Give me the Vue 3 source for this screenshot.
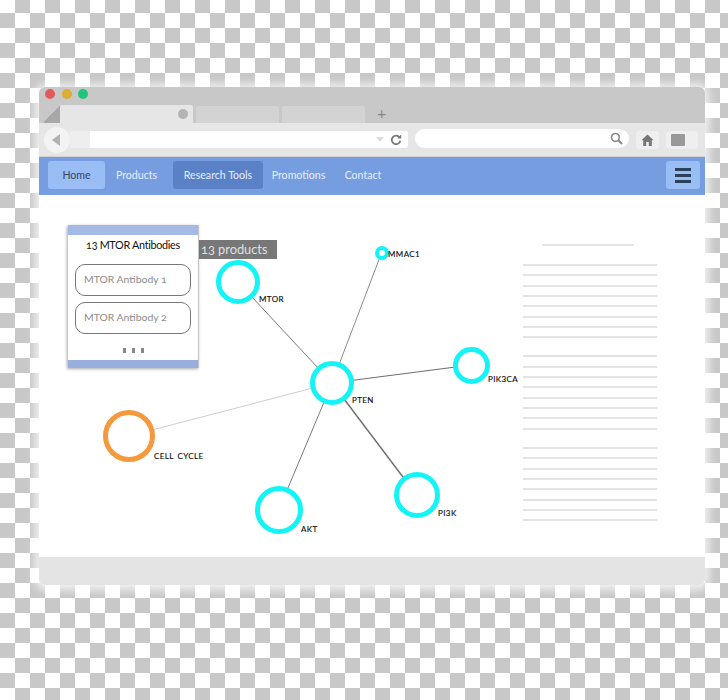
<template>
  <div class="page">
    <div class="window">
      <!-- Title bar with tabs -->
      <div class="titlebar">
        <div class="lights">
          <span class="light red"></span>
          <span class="light yellow"></span>
          <span class="light green"></span>
        </div>
        <div class="tabs">
          <span class="tab-corner"></span>
          <div class="tab active"><span class="tab-close"></span></div>
          <div class="tab"></div>
          <div class="tab"></div>
          <span class="tab-plus">+</span>
        </div>
      </div>

      <!-- Toolbar -->
      <div class="toolbar">
        <div class="back"><span class="back-arrow"></span></div>
        <div class="back-gap"></div>
        <div class="url">
          <span class="url-caret"></span>
          <svg class="reload" width="12" height="12" viewBox="0 0 12 12">
            <path d="M9.6 3.4A4.3 4.3 0 1 0 10.3 6.8" fill="none" stroke="#777" stroke-width="1.7" />
            <path d="M7.3 4.4h3.9V0.6z" fill="#777" />
          </svg>
        </div>
        <div class="search">
          <svg width="13" height="13" viewBox="0 0 12 12">
            <circle cx="5" cy="5" r="3.6" fill="none" stroke="#888" stroke-width="1.5" />
            <path d="M7.7 7.7l3.4 3.4" stroke="#888" stroke-width="1.9" />
          </svg>
        </div>
        <div class="tool-btn home-btn">
          <svg width="13" height="12" viewBox="0 0 13 12">
            <path d="M6.5 0.5L0.4 6.2h1.8V12h3V8h2.6v4h3V6.2h1.8z" fill="#777" />
          </svg>
        </div>
        <div class="tool-btn ext-btn"><span class="ext-square"></span></div>
      </div>

      <!-- Navbar -->
      <nav class="navbar">
        <a v-for="item in navItems" :key="item.label" class="nav-item" :class="item.kind">{{ item.label }}</a>
        <button class="burger">
          <span></span>
          <span></span>
          <span></span>
        </button>
      </nav>

      <!-- Content -->
      <div class="content">
        <div class="canvas">
          <svg class="edges" width="484" height="362" viewBox="0 0 484 362">
            <line
              v-for="edge in edges"
              :key="edge.to"
              :x1="hub.x"
              :y1="hub.y"
              :x2="edge.x"
              :y2="edge.y"
              :stroke="edge.color"
              :stroke-width="edge.width"
            />
          </svg>

          <div class="panel">
            <div class="panel-band"></div>
            <div class="panel-body">
              <h3 class="panel-title">13 MTOR Antibodies</h3>
              <div class="panel-item">MTOR Antibody 1</div>
              <div class="panel-item">MTOR Antibody 2</div>
              <div class="panel-more"><i></i><i></i><i></i></div>
            </div>
            <div class="panel-band bottom"></div>
          </div>
          <div class="tag">13 products</div>

          <div
            v-for="node in nodes"
            :key="node.name"
            class="node"
            :class="{ orange: node.orange }"
            :style="{
              left: node.x - node.r + 'px',
              top: node.y - node.r + 'px',
              width: node.r * 2 + 'px',
              height: node.r * 2 + 'px',
              borderWidth: node.ring + 'px',
            }"
          ></div>
          <span
            v-for="node in nodes"
            :key="node.name + '-label'"
            class="node-label"
            :style="{ left: node.lx + 'px', top: node.ly + 'px' }"
          >{{ node.name }}</span>
        </div>

        <div class="sidebar">
          <div class="sidebar-head"></div>
          <div v-for="n in 3" :key="n" class="line-group">
            <span v-for="l in 8" :key="l" class="line"></span>
          </div>
        </div>
      </div>

      <div class="footer"></div>
    </div>
  </div>
</template>

<script setup>
const navItems = [
  { label: "Home", kind: "current" },
  { label: "Products", kind: "products" },
  { label: "Research Tools", kind: "selected" },
  { label: "Promotions", kind: "promotions" },
  { label: "Contact", kind: "contact" },
];

// canvas starts at 39,195 in the screenshot
const at = (x, y) => ({ x: x - 39, y: y - 195 });

const hub = at(332, 383);

const nodes = [
  { name: "MTOR", ...at(238, 282), r: 22, ring: 5.5, lx: 220, ly: 99 },
  { name: "MMAC1", ...at(381.5, 253), r: 7, ring: 4.5, lx: 349, ly: 54 },
  { name: "PTEN", ...hub, r: 22, ring: 5.5, lx: 313, ly: 200 },
  { name: "PIK3CA", ...at(471, 365), r: 18.5, ring: 5, lx: 449, ly: 179 },
  { name: "CELL CYCLE", ...at(129, 436), r: 26, ring: 5, lx: 115, ly: 256, orange: true },
  { name: "AKT", ...at(279, 509.5), r: 24, ring: 5.5, lx: 262, ly: 329 },
  { name: "PI3K", ...at(416.5, 495), r: 23, ring: 5.5, lx: 399, ly: 313 },
];

const edges = [
  { to: "MTOR", ...at(238, 282), color: "#7a7a7a", width: 1 },
  { to: "MMAC1", ...at(381.5, 253), color: "#8a8a8a", width: 1 },
  { to: "PIK3CA", ...at(471, 365), color: "#6e6e6e", width: 1 },
  { to: "CELL CYCLE", ...at(129, 436), color: "#cecece", width: 1 },
  { to: "AKT", ...at(279, 509.5), color: "#7a7a7a", width: 1 },
  { to: "PI3K", ...at(416.5, 495), color: "#6e6e6e", width: 1.4 },
];
</script>

<style scoped>
.page {
  width: 728px;
  height: 700px;
  box-sizing: border-box;
  padding: 87px 23px 0 39px;
  overflow: hidden;
  background-color: #fff;
  background-image: repeating-conic-gradient(#c8c8c8 0 25%, #fff 0 50%);
  background-size: 30px 30px;
  background-position: 0 -2px;
  font-family: Lato, "Open Sans", sans-serif;
}

.window {
  width: 666px;
  height: 498px;
  display: flex;
  flex-direction: column;
  border-radius: 6px;
  background: #fff;
  box-shadow: 0 1px 9px 4px rgba(255, 255, 255, 0.75);
}

/* Title bar */
.titlebar {
  height: 36px;
  background: #c8c8c8;
  border-radius: 6px 6px 0 0;
  display: flex;
  flex-direction: column;
  flex-shrink: 0;
}

.lights {
  display: flex;
  gap: 6.5px;
  padding: 2px 0 0 6px;
  height: 16px;
  box-sizing: border-box;
}

.light {
  width: 10px;
  height: 10px;
  border-radius: 50%;
}

.red {
  background: #e35a5a;
}

.yellow {
  background: #d8ae35;
}

.green {
  background: #22c47a;
}

.tabs {
  display: flex;
  align-items: flex-end;
  height: 18px;
  margin-top: 2px;
  gap: 3px;
}

.tab-corner {
  width: 16px;
  height: 18px;
  margin-left: 5px;
  margin-right: -3px;
  background: linear-gradient(135deg, #c8c8c8 50%, #a8a8a8 50%);
}

.tab {
  width: 83px;
  height: 17px;
  background: #d3d3d3;
  border-radius: 2px 2px 0 0;
}

.tab.active {
  width: 133px;
  height: 18px;
  background: #e6e6e6;
  display: flex;
  align-items: center;
  justify-content: flex-end;
  padding-right: 5px;
  box-sizing: border-box;
}

.tab-close {
  width: 10px;
  height: 10px;
  border-radius: 50%;
  background: #b4b4b4;
}

.tab-plus {
  margin-left: 9px;
  height: 18px;
  font-size: 16px;
  line-height: 16px;
  color: #8a8a8a;
}

/* Toolbar */
.toolbar {
  height: 33px;
  background: #e6e6e6;
  display: flex;
  align-items: center;
  padding-left: 5px;
  flex-shrink: 0;
}

.back {
  width: 26px;
  height: 26px;
  border-radius: 50%;
  background: #f3f3f3;
  display: flex;
  align-items: center;
  justify-content: center;
  position: relative;
  z-index: 1;
}

.back-arrow {
  width: 0;
  height: 0;
  margin-left: -3px;
  border-top: 6px solid transparent;
  border-bottom: 6px solid transparent;
  border-right: 8px solid #b2b2b2;
}

.back-gap {
  width: 20px;
  height: 17px;
  background: #eeeeee;
}

.url {
  width: 318px;
  height: 17px;
  background: #fff;
  border-radius: 0 3px 3px 0;
  display: flex;
  align-items: center;
  justify-content: flex-end;
  gap: 6px;
  padding-right: 6px;
  box-sizing: border-box;
}

.url-caret {
  width: 0;
  height: 0;
  border-left: 4px solid transparent;
  border-right: 4px solid transparent;
  border-top: 5px solid #dcdcdc;
}

.search {
  width: 214px;
  height: 19px;
  margin: -2px 0 0 7px;
  background: #fff;
  border-radius: 10px;
  display: flex;
  align-items: center;
  justify-content: flex-end;
  padding-right: 6px;
  box-sizing: border-box;
}

.tool-btn {
  height: 18px;
  background: #efefef;
  border-radius: 3px;
  display: flex;
  align-items: center;
}

.home-btn {
  width: 23px;
  margin-left: 7px;
  justify-content: center;
}

.ext-btn {
  width: 32px;
  margin-left: 7px;
  padding-left: 5px;
  box-sizing: border-box;
}

.ext-square {
  width: 14px;
  height: 12px;
  background: #999;
  border-radius: 1px;
}

/* Navbar */
.navbar {
  height: 39px;
  background: #769de0;
  border-top: 1px solid #d2d2d2;
  box-sizing: border-box;
  display: flex;
  align-items: center;
  padding: 0 5px 2px 9px;
  flex-shrink: 0;
  font-size: 10.6px;
}

.nav-item {
  height: 28px;
  display: flex;
  align-items: center;
  justify-content: center;
  color: #e6eeff;
  border-radius: 3px;
  white-space: nowrap;
}

.nav-item.current {
  width: 57px;
  background: #9bbdf6;
  color: #37465f;
}

.nav-item.products {
  width: 41px;
  margin: 0 16px 0 11px;
}

.nav-item.selected {
  width: 90px;
  background: #5a80c6;
}

.nav-item.promotions {
  width: 53px;
  margin-left: 9px;
}

.nav-item.contact {
  width: 36px;
  margin-left: 20px;
}

.burger {
  margin-left: auto;
  width: 34px;
  height: 28px;
  padding: 0;
  border: 0;
  border-radius: 3px;
  background: #9bbdf6;
  display: flex;
  flex-direction: column;
  align-items: center;
  justify-content: center;
  gap: 3px;
}

.burger span {
  width: 16px;
  height: 3px;
  background: #2a4158;
}

/* Content */
.content {
  flex: 1;
  display: flex;
  min-height: 0;
  background: #fff;
}

.canvas {
  width: 484px;
  position: relative;
  padding: 30px 0 0 29px;
  box-sizing: border-box;
}

.edges {
  position: absolute;
  left: 0;
  top: 0;
}

.panel {
  width: 131px;
  height: 143px;
  display: flex;
  flex-direction: column;
  position: relative;
  background: #fff;
  box-shadow: -1px 1px 3px rgba(0, 0, 0, 0.35);
  border-right: 1px solid #c4c4c4;
  box-sizing: border-box;
}

.panel-band {
  height: 10px;
  background: #a4bae6;
}

.panel-band.bottom {
  height: 8px;
  background: #98aedc;
}

.panel-body {
  flex: 1;
  padding: 0 7px;
  display: flex;
  flex-direction: column;
  gap: 6px;
}

.panel-title {
  margin: 3px -7px 7px;
  height: 13px;
  font-size: 10.8px;
  line-height: 13px;
  font-weight: 400;
  letter-spacing: -0.3px;
  text-align: center;
  color: #111;
  white-space: nowrap;
  font-variant-numeric: oldstyle-nums;
}

.panel-item {
  height: 32px;
  box-sizing: border-box;
  border: 1px solid #777;
  border-radius: 10px;
  padding: 0 0 2px 8px;
  display: flex;
  align-items: center;
  font-size: 10.4px;
  color: #8c8c8c;
  white-space: nowrap;
  font-variant-numeric: oldstyle-nums;
}

.panel-more {
  display: flex;
  justify-content: center;
  gap: 6px;
  margin-top: 8px;
}

.panel-more i {
  width: 3px;
  height: 5px;
  background: #888;
}

.tag {
  position: absolute;
  left: 160px;
  top: 45px;
  width: 78px;
  height: 19px;
  padding-left: 2px;
  box-sizing: border-box;
  background: #777;
  color: #e0e0e0;
  font-size: 12.8px;
  line-height: 19px;
  white-space: nowrap;
  font-variant-numeric: oldstyle-nums;
}

.node {
  position: absolute;
  box-sizing: border-box;
  border-style: solid;
  border-color: #14f4f6;
  border-radius: 50%;
  background: #fff;
}

.node.orange {
  border-color: #f49a3c;
}

.node-label {
  position: absolute;
  font-size: 8px;
  line-height: 10px;
  letter-spacing: 0.4px;
  word-spacing: 1.5px;
  color: #111;
  white-space: pre;
  -webkit-text-stroke: 0.15px #111;
}

/* Text placeholder lines */
.sidebar {
  width: 134px;
  padding-top: 49px;
  display: flex;
  flex-direction: column;
  align-items: center;
}

.sidebar-head {
  width: 92px;
  height: 2px;
  background: #e4e4e4;
  margin: 0 4px 18px 0;
}

.line-group {
  width: 100%;
  display: flex;
  flex-direction: column;
  gap: 8.35px;
  margin-bottom: 17px;
}

.line {
  height: 2px;
  background: #e4e4e4;
}

.footer {
  height: 28px;
  background: #e4e4e4;
  border-radius: 0 0 6px 6px;
  flex-shrink: 0;
}
</style>
